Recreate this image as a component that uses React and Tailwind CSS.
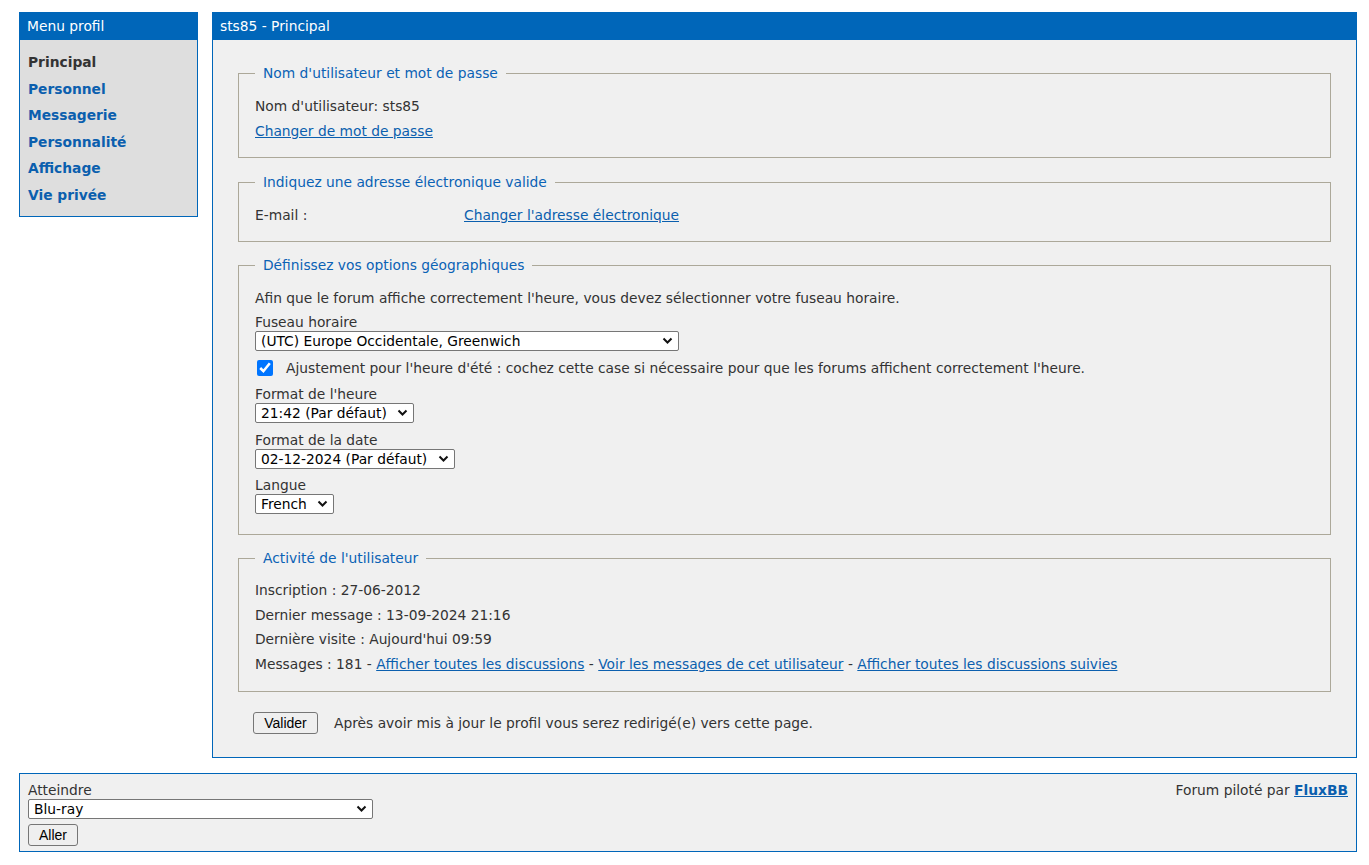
import React from "react";

const font = { fontFamily: '"DejaVu Sans", Verdana, sans-serif' };

const Field = ({ legend, children, className = "" }) => (
  <fieldset className={`border border-[#aca899] px-4 ${className}`}>
    <legend className="px-2 text-[#0b62b5] leading-[18px]">{legend}</legend>
    {children}
  </fieldset>
);

const Lnk = ({ children }) => (
  <a href="#" className="text-[#0b5fae] underline">{children}</a>
);

const Select = ({ w, children }) => (
  <div className={`relative ${w} h-5`}>
    <select
      className="appearance-none w-full h-5 border border-[#767676] rounded-[2px] bg-white text-black text-[13.8px] pl-[5px] pr-6 leading-4"
      defaultValue={children}
    >
      <option>{children}</option>
    </select>
    <svg className="absolute right-[6px] top-[6px] pointer-events-none" width="11" height="8" viewBox="0 0 11 8">
      <path d="M1.5 1.5 L5.5 5.5 L9.5 1.5" fill="none" stroke="#111" strokeWidth="2" />
    </svg>
  </div>
);

const btn = "h-[22px] border border-[#767676] rounded-[3px] bg-[#efefef] text-black text-[14px] font-['Liberation_Sans',Arial,sans-serif]";

export default function App() {
  const menu = ["Principal", "Personnel", "Messagerie", "Personnalité", "Affichage", "Vie privée"];
  return (
    <div className="min-h-[865px] bg-white text-[13.8px] text-[#333]" style={font}>
      <div className="flex gap-[14px] pl-[19px] pr-3 pt-3">
        <div className="w-[179px] shrink-0 self-start">
          <div className="h-7 bg-[#0066b9] text-white px-2 leading-7">Menu profil</div>
          <div className="bg-[#dedede] border border-t-0 border-[#0066b9] pl-2 pt-[9px] pb-[7px]">
            {menu.map((m, i) => (
              <div key={m} className={`font-bold leading-[26.6px] ${i === 0 ? "text-[#333]" : "text-[#0b5fae]"}`}>{m}</div>
            ))}
          </div>
        </div>

        <div className="flex-1">
          <div className="h-7 bg-[#0066b9] text-white px-2 leading-7">sts85 - Principal</div>
          <div className="bg-[#f0f0f0] border border-t-0 border-[#0066b9] pl-[25px] pr-[25px] pt-[24px] pb-[23px]">
            <Field legend="Nom d'utilisateur et mot de passe" className="pt-[12px] pb-[13px]">
              <div className="leading-[25px]">Nom d'utilisateur: sts85</div>
              <div className="leading-[25px]"><Lnk>Changer de mot de passe</Lnk></div>
            </Field>

            <Field legend="Indiquez une adresse électronique valide" className="mt-[15px] pt-[12px] pb-[13px]">
              <div className="flex leading-[25px]">
                <span className="w-[209px]">E-mail :</span>
                <Lnk>Changer l'adresse électronique</Lnk>
              </div>
            </Field>

            <Field legend="Définissez vos options géographiques" className="mt-[14px] pt-[12px] pb-[20px]">
              <div className="leading-[25px]">Afin que le forum affiche correctement l'heure, vous devez sélectionner votre fuseau horaire.</div>
              <div className="leading-[18px] mt-[2px]">Fuseau horaire</div>
              <Select w="w-[424px]">(UTC) Europe Occidentale, Greenwich</Select>
              <label className="flex items-center h-[30px] mt-[2px]">
                <input type="checkbox" defaultChecked className="w-4 h-4 ml-[2px] mr-[13px] accent-[#0075ff]" />
                Ajustement pour l'heure d'été : cochez cette case si nécessaire pour que les forums affichent correctement l'heure.
              </label>
              <div className="leading-[18px] mt-[2px]">Format de l'heure</div>
              <Select w="w-[159px]">21:42 (Par défaut)</Select>
              <div className="leading-[18px] mt-[8px]">Format de la date</div>
              <Select w="w-[200px]">02-12-2024 (Par défaut)</Select>
              <div className="leading-[18px] mt-[7px]">Langue</div>
              <Select w="w-[79px]">French</Select>
            </Field>

            <Field legend="Activité de l'utilisateur" className="mt-[14px] pt-[11px] pb-[15px]">
              <div className="leading-[24.5px]">Inscription : 27-06-2012</div>
              <div className="leading-[24.5px]">Dernier message : 13-09-2024 21:16</div>
              <div className="leading-[24.5px]">Dernière visite : Aujourd'hui 09:59</div>
              <div className="leading-[24.5px]">
                Messages : 181 - <Lnk>Afficher toutes les discussions</Lnk> - <Lnk>Voir les messages de cet utilisateur</Lnk> - <Lnk>Afficher toutes les discussions suivies</Lnk>
              </div>
            </Field>

            <div className="flex items-center gap-4 mt-5 ml-[15px]">
              <button className={`${btn} w-[65px]`}>Valider</button>
              <span>Après avoir mis à jour le profil vous serez redirigé(e) vers cette page.</span>
            </div>
          </div>
        </div>
      </div>

      <div className="mr-3 ml-[19px] mt-[15px] bg-[#f0f0f0] border border-[#0066b9] flex justify-between px-2 pt-[7px] pb-[5px]">
        <div>
          <div className="leading-[18px]">Atteindre</div>
          <Select w="w-[345px]">Blu-ray</Select>
          <div className="mt-[5px] flex">
            <button className={`${btn} w-[50px]`}>Aller</button>
          </div>
        </div>
        <div className="leading-[18px]">Forum piloté par <a href="#" className="font-bold text-[#0b5fae] underline">FluxBB</a></div>
      </div>
    </div>
  );
}
